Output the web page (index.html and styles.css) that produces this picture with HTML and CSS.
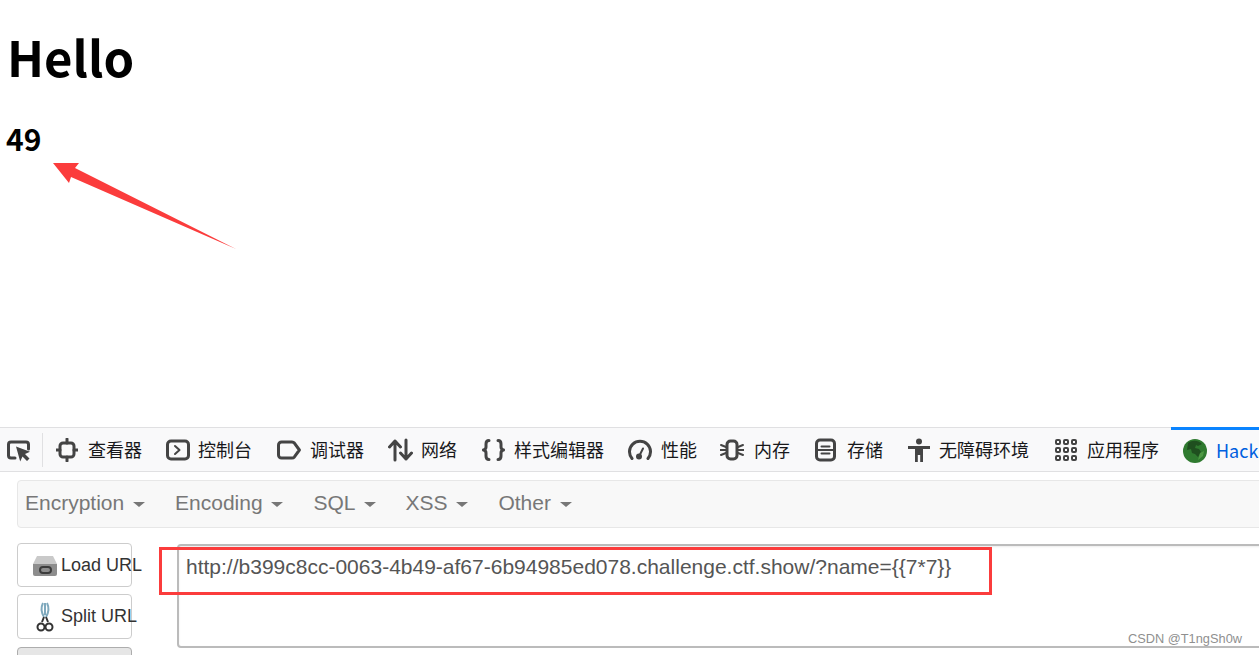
FILE: index.html
```html
<!DOCTYPE html>
<html lang="zh-CN">
<head>
    <meta charset="UTF-8">
    <title>Hello</title>
    <link rel="stylesheet" href="styles.css">
</head>
<body>
    <div class="page">
        <h1>Hello</h1>
        <h3>49</h3>
    </div>

    <div class="tabs">
        <div class="picker">
            <svg width="26" height="24" viewBox="0 0 26 24"><path d="M9 20H5a2.500 2.500 0 0 1-2.500-2.500v-11A2.500 2.500 0 0 1 5 4h15a2.500 2.500 0 0 1 2.500 2.500V11" class="ln"/><path d="M10 8.500l14 5.200-5 2.300 4.500 4.500-2.500 2.500-4.500-4.500-2.300 5z" class="fl"/></svg>
        </div>
        <div class="tab t-inspector">
            <svg width="22" height="24" viewBox="0 0 22 24"><rect x="4" y="5" width="14" height="14" rx="3" class="ln"/><path d="M11 1v4M11 19v4M0 12h4M18 12h4" class="ln"/></svg>
            <span>查看器</span>
        </div>
        <div class="tab t-console">
            <svg width="24" height="24" viewBox="0 0 24 24"><rect x="1.500" y="3" width="21" height="18" rx="3.500" class="ln"/><path d="M9 8l4.500 4L9 16" class="ln thin"/></svg>
            <span>控制台</span>
        </div>
        <div class="tab t-debugger">
            <svg width="24" height="24" viewBox="0 0 24 24"><path d="M4.500 4h10.500c1 0 1.800.4 2.400 1.100l5 6.900-5 6.900c-.6.700-1.400 1.100-2.400 1.100H4.500A3 3 0 0 1 1.500 17V7a3 3 0 0 1 3-3z" class="ln"/></svg>
            <span>调试器</span>
        </div>
        <div class="tab t-network">
            <svg width="25" height="24" viewBox="0 0 25 24"><path d="M7 22V3M1.500 9L7 3l5.500 6M18 2v19M12.500 15l5.500 6 5.500-6" class="ln"/></svg>
            <span>网络</span>
        </div>
        <div class="tab t-style">
            <svg width="23" height="24" viewBox="0 0 23 24"><path d="M7 2.500C4.500 2.500 4 4 4 6v3c0 1.500-.6 2.500-2.500 3C3.400 12.500 4 13.500 4 15v3c0 2 .5 3.500 3 3.500M16 2.500c2.500 0 3 1.500 3 3.500v3c0 1.500.6 2.500 2.500 3-1.900.5-2.500 1.500-2.500 3v3c0 2-.5 3.500-3 3.500" class="ln"/></svg>
            <span>样式编辑器</span>
        </div>
        <div class="tab t-perf">
            <svg width="24" height="24" viewBox="0 0 24 24"><path d="M4 20.500A10.500 10.500 0 1 1 20 20.500" class="ln"/><circle cx="11" cy="18.500" r="3" class="fl"/><path d="M11 18.500l4-8" class="ln thin"/></svg>
            <span>性能</span>
        </div>
        <div class="tab t-memory">
            <svg width="24" height="24" viewBox="0 0 24 24"><rect x="7" y="3" width="10" height="18" rx="3.500" class="ln"/><path d="M1 7l5 2M0 12h6M1 17l5-2M23 7l-5 2M24 12h-6M23 17l-5-2" class="ln thin"/></svg>
            <span>内存</span>
        </div>
        <div class="tab t-storage">
            <svg width="21" height="24" viewBox="0 0 21 24"><rect x="1.500" y="2" width="18" height="20" rx="3.500" class="ln"/><path d="M6.500 8.500h8M6.500 15.500h8M1.500 12h18" class="ln thin"/></svg>
            <span>存储</span>
        </div>
        <div class="tab t-access">
            <svg width="22" height="24" viewBox="0 0 22 24"><circle cx="11" cy="3.500" r="3" class="fl"/><path d="M0 8h22v3h-7v13h-2.800v-7h-2.400v7H7V11H0z" class="fl"/></svg>
            <span>无障碍环境</span>
        </div>
        <div class="tab t-apps">
            <svg width="22" height="22" viewBox="0 0 22 22"><g class="ln thin"><rect x="1" y="1" width="4" height="4" rx="1"/><rect x="9" y="1" width="4" height="4" rx="1"/><rect x="17" y="1" width="4" height="4" rx="1"/><rect x="1" y="9" width="4" height="4" rx="1"/><rect x="9" y="9" width="4" height="4" rx="1"/><rect x="17" y="9" width="4" height="4" rx="1"/><rect x="1" y="17" width="4" height="4" rx="1"/><rect x="9" y="17" width="4" height="4" rx="1"/><rect x="17" y="17" width="4" height="4" rx="1"/></g></svg>
            <span>应用程序</span>
        </div>
        <div class="tab tab-active">
            <svg width="24" height="24" viewBox="0 0 24 24"><circle cx="12" cy="12" r="12" fill="#2f7a2f"/><path d="M5 4c4-3 10-3 14 1l-4 2-2-1-1 3 4 1 2 3-3 5-3-3-3-1-1-4-4 1z" fill="#1f4f1f"/><path d="M17 14l4-2-1 5-5 4z" fill="#4e9a44"/></svg>
            <span>Hack</span>
        </div>
    </div>

    <div class="hackbar">
        <div class="menu">
            <span class="menu-item">Encryption <i class="caret"></i></span>
            <span class="menu-item">Encoding <i class="caret"></i></span>
            <span class="menu-item">SQL <i class="caret"></i></span>
            <span class="menu-item">XSS <i class="caret"></i></span>
            <span class="menu-item">Other <i class="caret"></i></span>
        </div>
        <div class="workarea">
            <div class="buttons">
                <div class="btn">
                    <svg width="26" height="24" viewBox="0 0 26 24"><path d="M5 3h16l4 8H1z" fill="#c9c9c9"/><path d="M1 11h24v10a2 2 0 0 1-2 2H3a2 2 0 0 1-2-2z" fill="#8d8d8d"/><rect x="8" y="14" width="11" height="6" rx="3" fill="none" stroke="#3c3c3c" stroke-width="2"/></svg>
                    <span>Load URL</span>
                </div>
                <div class="btn">
                    <svg width="26" height="30" viewBox="0 0 26 30"><path d="M11 1c-2 4-2 9 1 14M15 1c2 4 2 9-1 14M13 1v12" fill="none" stroke="#7fa9bd" stroke-width="2"/><path d="M12 15l-2 5M14 15l2 5" stroke="#333" stroke-width="2"/><circle cx="9" cy="25" r="3.500" fill="none" stroke="#333" stroke-width="2"/><circle cx="17" cy="25" r="3.500" fill="none" stroke="#333" stroke-width="2"/></svg>
                    <span>Split URL</span>
                </div>
                <div class="btn btn-off"></div>
            </div>
            <div class="url">http://b399c8cc-0063-4b49-af67-6b94985ed078.challenge.ctf.show/?name={{7*7}}</div>
        </div>
    </div>

    <svg class="arrow" width="240" height="100" viewBox="0 0 240 100"><path d="M53 13L79 13 75 18 236 99 71 27 69 33z" fill="#fb3c3c"/></svg>
    <div class="redbox"></div>
    <div class="mark">CSDN @T1ngSh0w</div>
</body>
</html>
```
FILE: styles.css
```css
html, body {
    margin: 0;
    height: 100%;
}
body {
    width: 1259px;
    height: 655px;
    overflow: hidden;
    position: relative;
    background: white;
    font-family: "Liberation Sans", Arial, sans-serif;
}
.page {
    height: 427px;
    padding-left: 7px;
    font-family: "Noto Sans CJK SC", "Open Sans", sans-serif;
    color: black;
    box-sizing: border-box;
}
h1 {
    margin: 0;
    padding-top: 18px;
    font-size: 49px;
    line-height: 75px;
    font-weight: 700;
}
h3 {
    margin: 0 0 0 -1px;
    padding-top: 30px;
    font-size: 30px;
    line-height: 30px;
    font-weight: 700;
}

.tabs {
    display: flex;
    align-items: center;
    height: 43px;
    background: #f9f9fa;
    border-top: 1px solid #e0e0e2;
    border-bottom: 1px solid #e0e0e2;
    font-family: "Noto Sans CJK SC", sans-serif;
    font-size: 18px;
    color: #18181a;
    white-space: nowrap;
}
.tabs svg {
    flex: none;
}
.tab span {
    margin-top: -2px;
}
.ln {
    fill: none;
    stroke: #444;
    stroke-width: 3;
    stroke-linecap: round;
    stroke-linejoin: round;
}
.ln.thin, .thin rect {
    stroke-width: 2;
}
.fl {
    fill: #444;
}
.picker {
    display: flex;
    align-items: center;
    height: 34px;
    width: 43px;
    padding-left: 6px;
    box-sizing: border-box;
    border-right: 1px solid #e0e0e2;
    margin-right: 13px;
}
.tab {
    display: flex;
    align-items: center;
    gap: 10px;
    margin-right: 24px;
}
.t-console { gap: 8px; margin-right: 25px; }
.t-debugger { gap: 9px; }
.t-network { gap: 8px; margin-right: 25px; }
.t-style { gap: 9px; }
.t-perf { gap: 9px; margin-right: 23px; }
.t-memory { margin-right: 25px; }
.t-storage { gap: 11px; margin-right: 25px; }
.t-access { gap: 9px; margin-right: 26px; }
.t-apps { margin-right: 12px; }
.tab-active {
    align-self: stretch;
    padding-left: 12px;
    gap: 9px;
    margin: -1px 0 0;
    border-top: 3px solid #0a84ff;
    color: #0060df;
    flex: 1;
    overflow: hidden;
}

.hackbar {
    padding: 8px 0 0 17px;
}
.menu {
    display: flex;
    align-items: center;
    gap: 30px;
    height: 44px;
    padding: 0 0 2px 7px;
    margin-right: -8px;
    background: #f8f8f8;
    border: 1px solid #e7e7e7;
    border-radius: 4px;
    font-size: 21px;
    color: #777;
}
.caret {
    display: inline-block;
    width: 0;
    height: 0;
    margin-left: 3px;
    vertical-align: middle;
    border-top: 5px solid #777;
    border-left: 6px solid transparent;
    border-right: 6px solid transparent;
}
.workarea {
    display: flex;
    gap: 45px;
    margin-top: 15px;
}
.buttons {
    display: flex;
    flex-direction: column;
    gap: 7px;
    width: 115px;
    flex: none;
}
.btn {
    display: flex;
    align-items: center;
    height: 44px;
    box-sizing: border-box;
    padding-left: 14px;
    border: 1px solid #ccc;
    border-radius: 4px;
    font-size: 18px;
    color: #333;
    white-space: nowrap;
}
.btn svg {
    flex: none;
}
.btn + .btn {
    height: 45px;
}
.btn span {
    margin-left: 3px;
}
.btn-off {
    height: 30px !important;
    margin-top: 1px;
    background: #e6e6e6;
    border-color: #adadad;
}
.url {
    flex: none;
    width: 1100px;
    height: 104px;
    box-sizing: border-box;
    margin-top: 1px;
    padding: 9px 7px;
    border: 2px solid #bbb;
    border-radius: 4px;
    box-shadow: inset 0 1px 2px rgba(0,0,0,0.08);
    font-size: 21px;
    line-height: 24px;
    color: #555;
    white-space: nowrap;
}

/* annotations drawn over the screenshot */
.arrow {
    position: absolute;
    left: 0;
    top: 150px;
}
.redbox {
    position: absolute;
    left: 159px;
    top: 547px;
    width: 827px;
    height: 42px;
    border: 3px solid #fb3c3c;
}
.mark {
    position: absolute;
    left: 1128px;
    top: 631px;
    font-size: 12.8px;
    color: #8f8f8f;
}
```
